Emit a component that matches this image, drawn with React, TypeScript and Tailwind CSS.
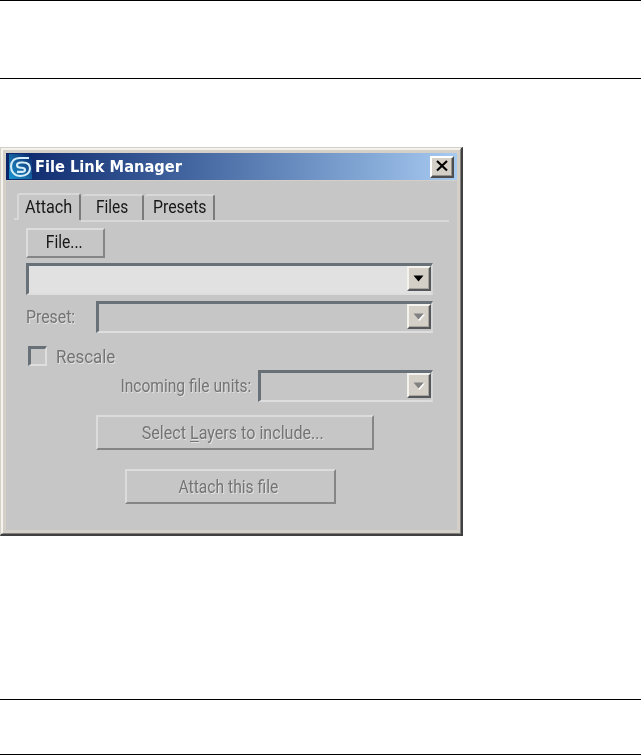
import React from 'react';
import clsx from 'clsx';

type LabelProps = { children: React.ReactNode; className?: string; disabled?: boolean };

const Label = ({ children, className, disabled }: LabelProps) => (
    <span
        className={clsx(
            'inline-block whitespace-nowrap text-[18px] leading-5',
            disabled ? 'text-[#747474] [text-shadow:1px_1px_0_#e2e2e2]' : 'text-[#181818]',
            className,
        )}
    >
        {children}
    </span>
);

const Logo = () => (
    <svg width="23" height="25" viewBox="0 0 23 25" fill="none">
        <defs>
            <linearGradient id="logo" x1="0" y1="1" x2="1" y2="0">
                <stop offset="0" stopColor="#1594cf" />
                <stop offset="0.45" stopColor="#1768a6" />
                <stop offset="1" stopColor="#0a246a" />
            </linearGradient>
        </defs>
        <rect width="23" height="25" fill="url(#logo)" />
        <path d="M20 4H11C5 4 2 7.500 2 12.500S5.500 22 11.500 22 21 18.500 21 14.500 18 8.500 14 8.500h-2c-2.500 0-4 1-4 2.700s1.500 2.500 4 2.500 4 .7 4 2.200-1.500 2-3.500 2H8" stroke="#d5edf8" strokeWidth="2.1" />
    </svg>
);

const DropButton = ({ disabled }: { disabled?: boolean }) => (
    <span className="flex h-[25px] w-6 items-center justify-center border-2 border-t-[#f4f2ed] border-r-[#55585b] border-b-[#55585b] border-l-[#f4f2ed] bg-[#d4d0c8] shadow-[inset_-1px_-1px_0_#aaa69f]">
        <svg width="12" height="8" viewBox="0 0 12 8">
            {disabled && <path d="M12 1.500 6.500 8 5 6.500l5.500-5Z" fill="#fff" />}
            <path d="M.5.5h10l-5 6Z" fill={disabled ? '#818181' : '#000'} />
        </svg>
    </span>
);

const ComboBox = ({ className, disabled }: { className?: string; disabled?: boolean }) => (
    <div
        className={clsx(
            'flex h-8 justify-end border-t-[3px] border-r-2 border-b-2 border-l-[3px] border-t-[#687078] border-r-[#d6d6d6] border-b-[#dedede] border-l-[#687078]',
            disabled ? 'bg-[#c6c6c6]' : 'bg-[#e1e1e1]',
            className,
        )}
    >
        <DropButton disabled={disabled} />
    </div>
);

const Button = ({ children, className }: { children: React.ReactNode; className?: string }) => (
    <button
        className={clsx(
            'flex items-center justify-center border-2 border-t-[#dcdcdc] border-r-[#858585] border-b-[#858585] border-l-[#dcdcdc]',
            className,
        )}
    >
        {children}
    </button>
);

const Tab = ({ children, className }: { children: React.ReactNode; className?: string }) => (
    <div className={clsx('flex rounded-t-[3px] border-t-2 border-r-2 border-t-[#d8d8d8] border-r-[#7b7b7b]', className)}>
        {children}
    </div>
);

const TitleBar = () => (
    <div className="flex h-[27px] items-center bg-linear-to-r from-[#0a246a] to-[#a6caf0] pr-[3px] pl-[3px]">
        <Logo />
        <span className="ml-[3px] inline-block origin-left scale-x-[1.016] font-['DejaVu_Sans_Condensed','DejaVu_Sans',sans-serif] text-[16px] leading-5 font-bold whitespace-nowrap text-white">
            File Link Manager
        </span>
        <button className="ml-auto flex h-[22px] w-6 items-center justify-center border-2 border-t-white border-r-[#4d4d4d] border-b-[#4d4d4d] border-l-white bg-[#d4d0c8] pb-0.5 shadow-[inset_-1px_-1px_0_#96938d]">
            <svg width="13" height="12" viewBox="0 0 13 12">
                <path d="m1 1 10 9.500M11 1 1 10.500" stroke="#000" strokeWidth="2.2" />
            </svg>
        </button>
    </div>
);

const App = () => {
    return (
        <div className="flex h-[755px] w-[641px] flex-col overflow-hidden bg-white font-[Roboto,'Liberation_Sans',sans-serif]">
            <div className="h-[79px] shrink-0 border-y border-black" />

            <div className="mt-[68px] h-[389px] w-[463px] shrink-0 border-t border-r-2 border-b-2 border-l border-t-[#d4d0c8] border-r-[#404040] border-b-[#404040] border-l-[#d4d0c8]">
                <div className="h-full border-t-2 border-r border-b border-l-2 border-t-[#f4f2ec] border-r-[#808080] border-b-[#808080] border-l-[#f4f2ec]">
                    <div className="h-full border-[3px] border-[#d4d0c8] bg-[#c6c6c6]">
                        <TitleBar />
                        <div className="h-px bg-[#d4d0c8]" />

                        <div className="mt-3 ml-2 flex h-[27px] items-end">
                            <div className="h-0.5 w-[3px] bg-[#d8d8d8]" />
                            <Tab className="h-[27px] w-16 border-l-2 border-l-[#d8d8d8] pt-0.5 pl-1.5">
                                <Label className="origin-left scale-x-[0.9]">Attach</Label>
                            </Tab>
                            <Tab className="ml-px h-[26px] w-[62px] pt-px pl-[14px]">
                                <Label className="origin-left scale-x-[0.86]">Files</Label>
                            </Tab>
                            <Tab className="ml-px h-[26px] w-[70px] pt-px pl-2">
                                <Label className="origin-left scale-x-[0.88]">Presets</Label>
                            </Tab>
                        </div>
                        <div className="mr-2 ml-[75px] h-0.5 bg-[#d8d8d8]" />

                        <div className="mr-6 ml-5 flex flex-col">
                            <Button className="mt-[6px] h-[30px] w-[79px] pr-[3px] pb-[3px]">
                                <Label className="scale-x-[0.87]">File...</Label>
                            </Button>
                            <ComboBox className="mt-[5px]" />
                            <div className="mt-[6px] flex items-center">
                                <Label disabled className="w-[70px] origin-left scale-x-[0.88]">Preset:</Label>
                                <ComboBox disabled className="w-[337px]" />
                            </div>
                            <div className="mt-[13px] ml-0.5 flex h-5 items-center">
                                <span className="h-5 w-[19px] border-t-[3px] border-r-2 border-b-2 border-l-[3px] border-t-[#687078] border-r-[#dedede] border-b-[#dedede] border-l-[#687078]" />
                                <Label disabled className="mt-0.5 ml-[9px] origin-left scale-x-[0.94]">Rescale</Label>
                            </div>
                            <div className="mt-1 flex items-center justify-end">
                                <Label disabled className="mr-[7px] origin-right scale-x-[0.865]">Incoming file units:</Label>
                                <ComboBox disabled className="w-[175px]" />
                            </div>
                            <Button className="mt-[13px] ml-[70px] h-[35px] w-[278px] pr-1">
                                <Label disabled className="scale-x-[0.895]">
                                    Select <span className="underline underline-offset-2">L</span>ayers to include...
                                </Label>
                            </Button>
                            <Button className="mt-[19px] ml-[99px] h-[35px] w-[211px] pr-1">
                                <Label disabled className="scale-x-[0.87]">Attach this file</Label>
                            </Button>
                        </div>
                    </div>
                </div>
            </div>

            <div className="mt-auto h-14 shrink-0 border-y border-black" />
        </div>
    );
};

export default App;
